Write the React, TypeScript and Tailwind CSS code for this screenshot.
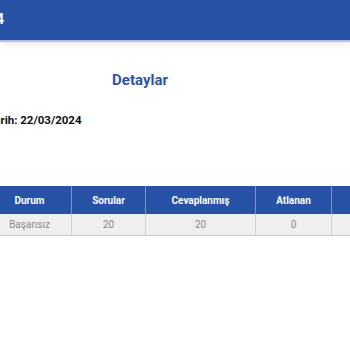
import React from 'react';

const columns = [
  { label: 'Durum', value: 'Başarısız', width: 'w-[83px]' },
  { label: 'Sorular', value: '20', width: 'w-[74px]' },
  { label: 'Cevaplanmış', value: '20', width: 'w-[110px]' },
  { label: 'Atlanan', value: '0', width: 'w-[76px]' },
  { label: 'Puan', value: '0', width: 'w-[80px]' },
];

const App = () => {
  return (
    <div className="w-[350px] h-[350px] overflow-hidden bg-white font-['Roboto',sans-serif]">
      <div className="h-10 bg-[#2852a6] flex items-start pt-[9px] shadow-[0_2px_0_#b6bde4,0_4px_8px_rgba(0,0,0,0.08)]">
        <div className="w-[4px] shrink-0 flex justify-end">
          <span className="whitespace-nowrap text-white font-bold text-[14px]">Sınav Sonucu - 22/03/2024</span>
        </div>
      </div>

      <div className="-ml-[20px] w-[320px]">
        <h2 className="mt-[30px] text-center text-[15px] leading-5 font-bold text-[#2f55a2]">Detaylar</h2>

        <p className="mt-[22px] pl-[8px] text-[11.5px] leading-4 font-bold text-[#111]">Tarih: 22/03/2024</p>

        <div className="mt-[58px] pl-[8px]">
          <div className="flex w-max">
            {columns.map((c, i) => (
              <div key={c.label} className={`${c.width} shrink-0 ${i > 0 ? 'border-l border-l-[#7d95cc]' : ''}`}>
                <div className="h-[28px] bg-[#2852a6] flex items-center justify-center text-white font-bold text-[10px]">
                  {c.label}
                </div>
                <div className={`h-[22px] bg-[#efefef] border-b border-[#c9c9c9] flex items-center justify-center text-[10px] text-[#8a8a8a] ${i > 0 ? '-ml-px border-l border-l-[#cfcfcf]' : ''}`}>
                  {c.value}
                </div>
              </div>
            ))}
          </div>
        </div>
      </div>
    </div>
  );
};

export default App;
